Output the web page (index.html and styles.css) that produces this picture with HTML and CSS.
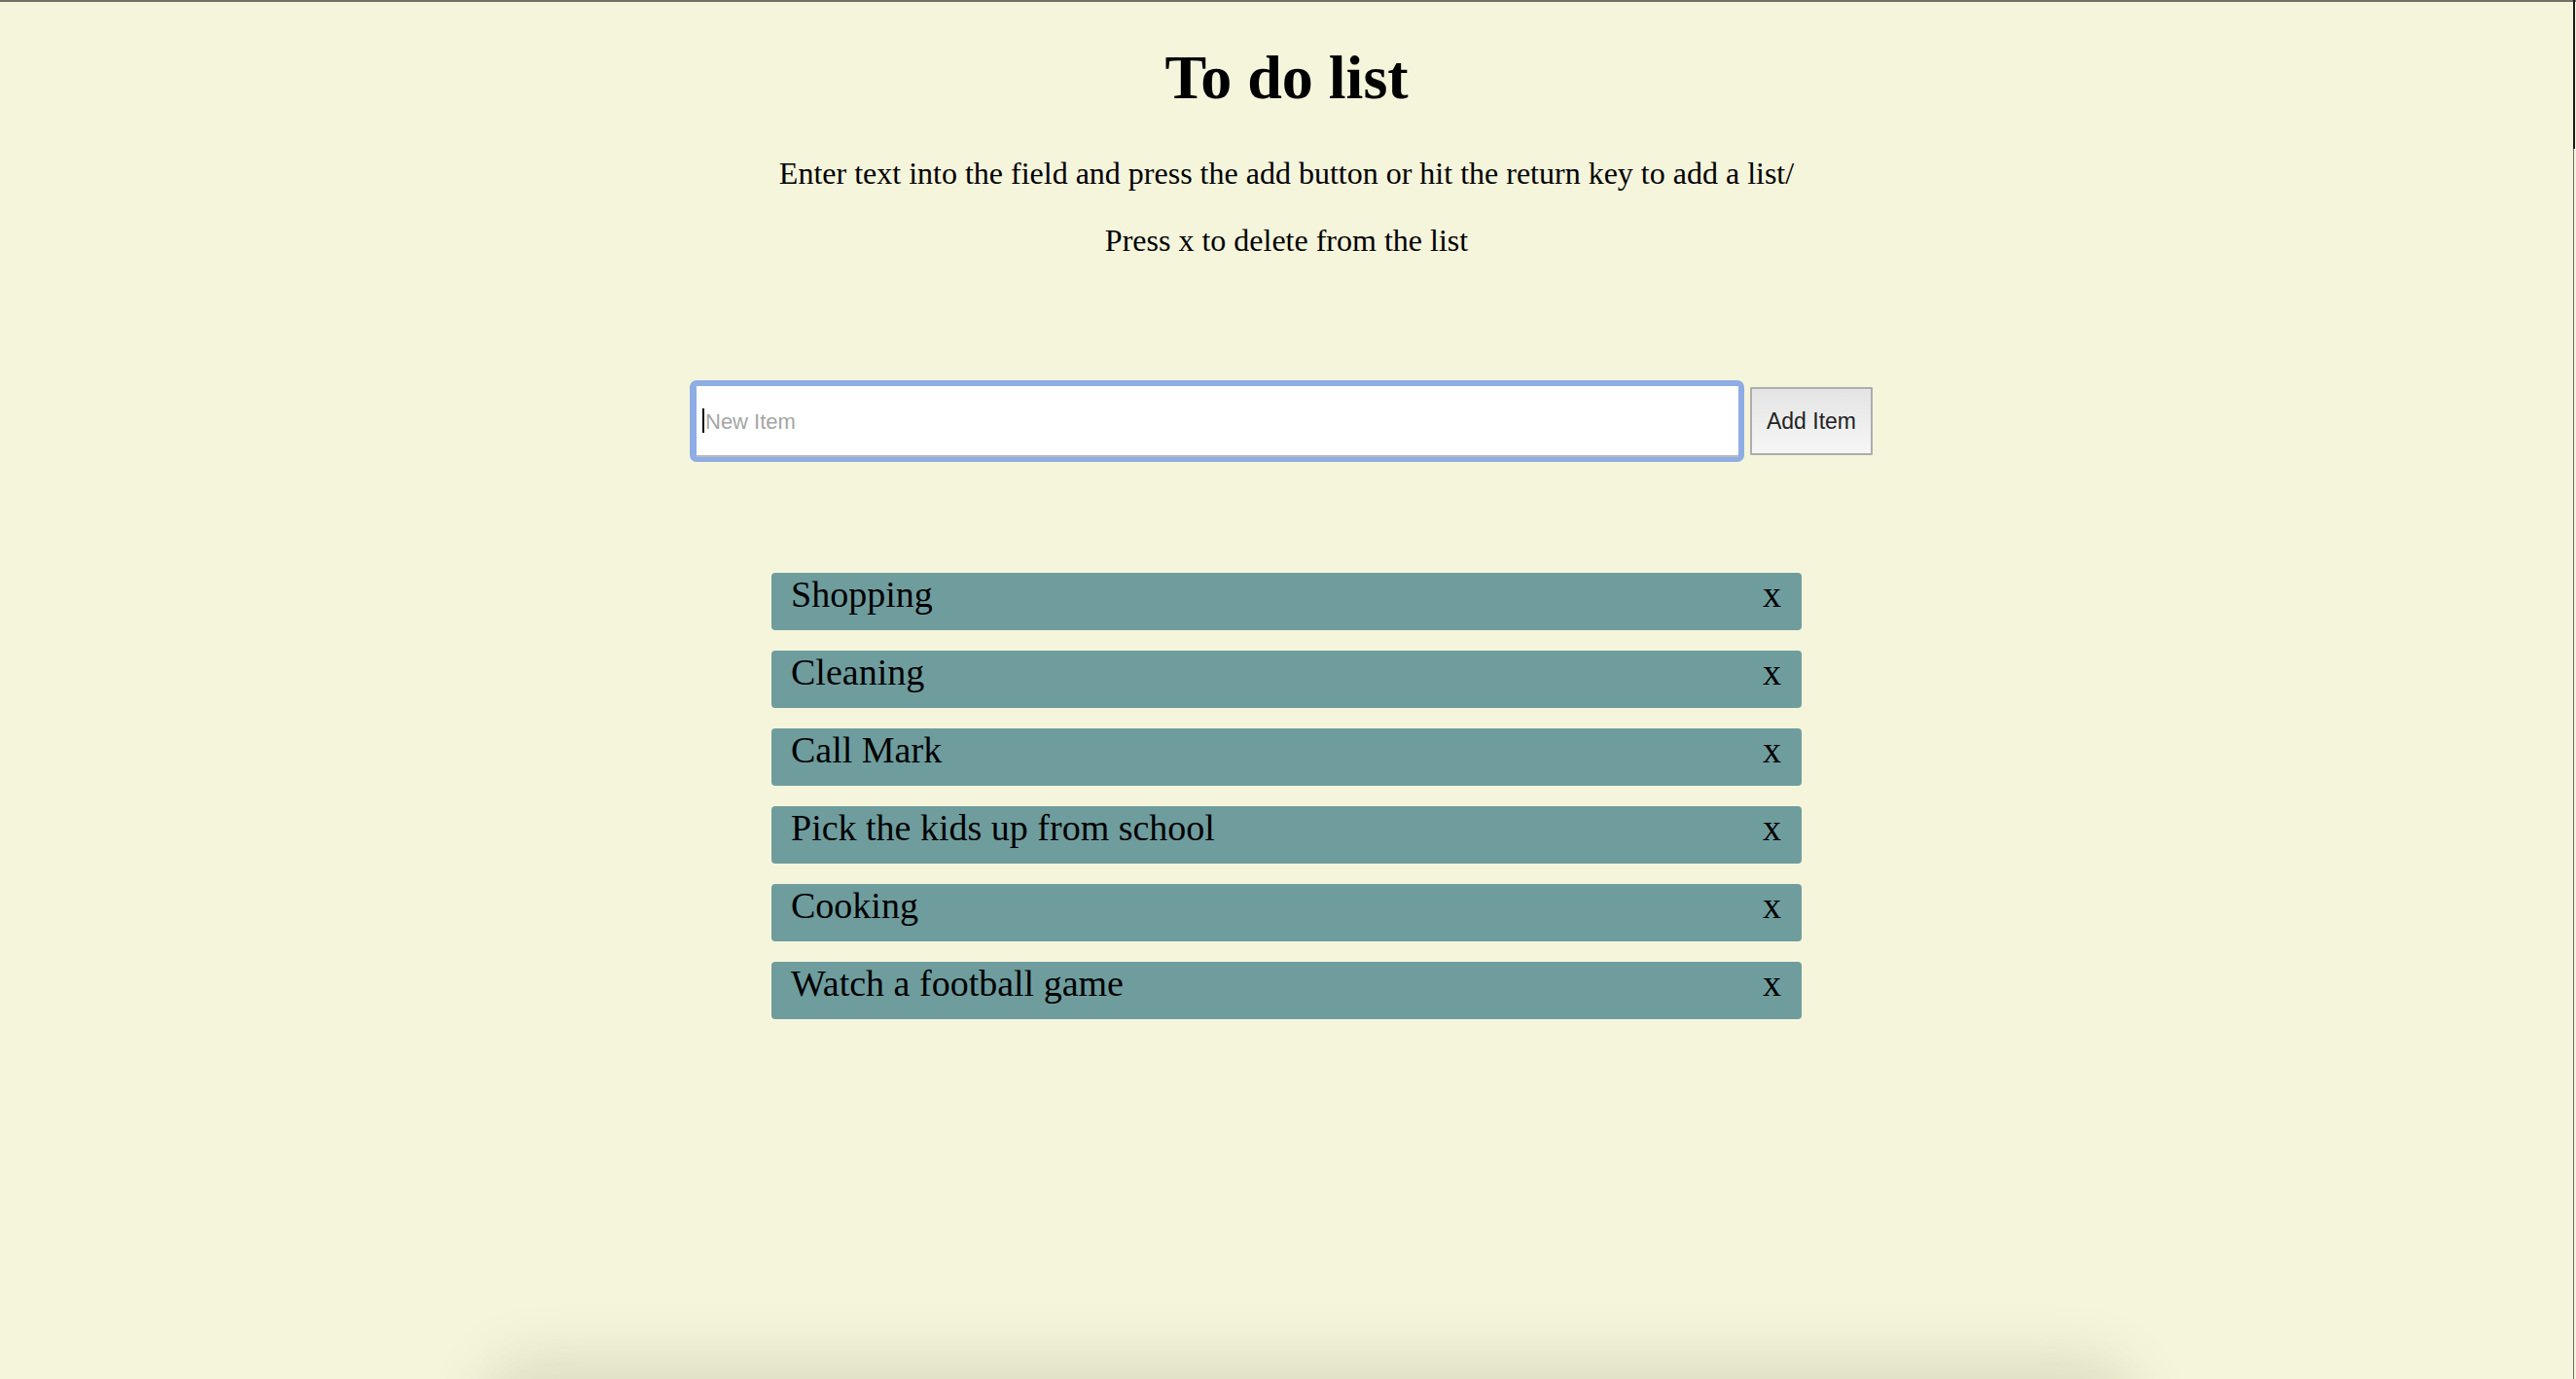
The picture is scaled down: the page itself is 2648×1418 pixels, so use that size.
FILE: index.html
```html
<!DOCTYPE html>
<html lang="en">
<head>
<meta charset="utf-8">
<title>To do list</title>
<link rel="stylesheet" href="styles.css">
</head>
<body>
<div class="page">
  <h1 class="title">To do list</h1>
  <p class="hint">Enter text into the field and press the add button or hit the return key to add a list/</p>
  <p class="hint">Press x to delete from the list</p>

  <form class="entry" onsubmit="return false;">
    <span class="field">
      <input class="field-input" type="text" placeholder="New Item">
      <span class="caret"></span>
    </span>
    <button class="add-btn" type="button">Add Item</button>
  </form>

  <ul class="todo">
    <li class="todo-item"><span class="todo-text">Shopping</span><span class="todo-del">x</span></li>
    <li class="todo-item"><span class="todo-text">Cleaning</span><span class="todo-del">x</span></li>
    <li class="todo-item"><span class="todo-text">Call Mark</span><span class="todo-del">x</span></li>
    <li class="todo-item"><span class="todo-text">Pick the kids up from school</span><span class="todo-del">x</span></li>
    <li class="todo-item"><span class="todo-text">Cooking</span><span class="todo-del">x</span></li>
    <li class="todo-item"><span class="todo-text">Watch a football game</span><span class="todo-del">x</span></li>
  </ul>
</div>
<div class="frame-top"></div>
<div class="frame-right"></div>
<div class="frame-right-lower"></div>
<div class="bottom-shadow"></div>
</body>
</html>
```

FILE: styles.css
```css
html {
  overflow: hidden;
  background: #f5f5dc;
}

body {
  margin: 0;
  padding: 0 3px 0 0;
  background: #f5f5dc;
  color: #000;
  font-family: "Liberation Serif", "Times New Roman", serif;
}

.page {
  display: block;
  padding-top: 1px;
}

.title {
  margin: 42px 0 43px;
  font-size: 64px;
  font-weight: bold;
  text-align: center;
  line-height: normal;
}

.hint {
  margin: 32px 0;
  font-size: 32px;
  text-align: center;
  line-height: normal;
}

.entry {
  display: flex;
  justify-content: center;
  align-items: center;
  gap: 6px;
  margin: 125px 0 0;
  padding-right: 11px;
}

.field {
  position: relative;
  display: flex;
}

.field-input {
  box-sizing: border-box;
  width: 1084px;
  height: 84px;
  margin: 0;
  padding: 0 0 0 9px;
  border-style: solid;
  border-color: #8eade5;
  border-width: 6px 6px 5px 7px;
  border-radius: 7px;
  background: #fff;
  box-shadow: inset 0 -2px 0 #b9b9b9;
  font-family: "Liberation Sans", Arial, sans-serif;
  font-size: 22px;
  color: #000;
  outline: none;
}

.field-input::placeholder {
  color: #a5a5a5;
}

.caret {
  position: absolute;
  left: 13px;
  top: 29px;
  width: 2px;
  height: 25px;
  background: #000;
}

.add-btn {
  box-sizing: border-box;
  width: 126px;
  height: 70px;
  margin: 0;
  padding: 0;
  border: 2px solid #adadad;
  border-radius: 1px;
  background: linear-gradient(#e4e4e4, #f6f6f6);
  font-family: "Liberation Sans", Arial, sans-serif;
  font-size: 23px;
  color: #222;
}

.todo {
  list-style: none;
  margin: 114px 0 0;
  padding: 0;
}

.todo-item {
  box-sizing: border-box;
  display: flex;
  justify-content: space-between;
  align-items: flex-start;
  width: 1059px;
  height: 59px;
  margin: 0 auto 21px;
  padding: 0 21px 0 20px;
  background: #6f9d9e;
  border-radius: 4px;
  font-size: 38px;
  line-height: normal;
}

.frame-top {
  position: fixed;
  top: 0;
  left: 0;
  right: 0;
  height: 2px;
  background: #6f6f68;
}

.frame-right {
  position: fixed;
  top: 0;
  right: 1px;
  width: 2px;
  height: 153px;
  background: #1c1c1c;
}

.frame-right-lower {
  position: fixed;
  top: 153px;
  bottom: 0;
  right: 2px;
  width: 1px;
  background: #6c6c66;
}

.bottom-shadow {
  position: fixed;
  left: 520px;
  width: 1650px;
  bottom: -105px;
  height: 100px;
  border-radius: 30px;
  background: #dad8c2;
  box-shadow: 0 0 60px 25px rgba(90, 85, 40, 0.16);
}
```
